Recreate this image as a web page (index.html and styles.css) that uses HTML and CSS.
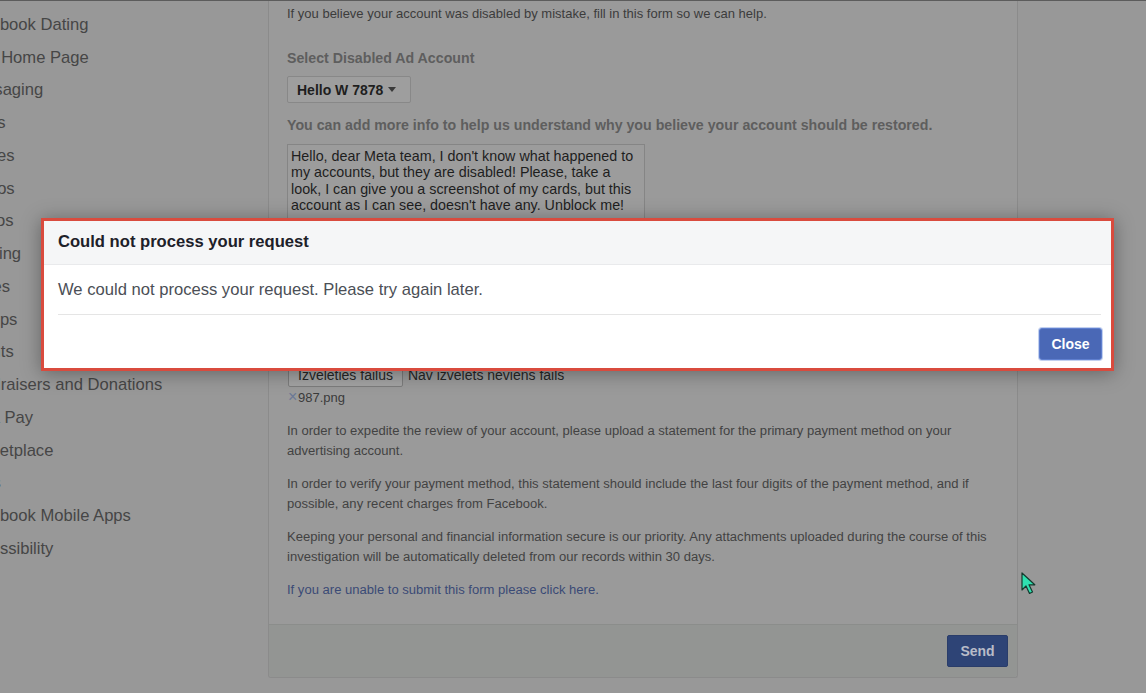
FILE: index.html
```html
<!DOCTYPE html>
<html lang="en">
<head>
    <meta charset="UTF-8">
    <meta name="viewport" content="width=device-width, initial-scale=1.0">
    <title>Disabled Ad Account</title>
    <link rel="stylesheet" href="styles.css">
</head>
<body>
    <div class="page">
        <nav class="help-nav">
            <a class="help-nav-item" href="#">Friending</a>
            <a class="help-nav-item" href="#">Facebook Dating</a>
            <a class="help-nav-item" href="#">Your Home Page</a>
            <a class="help-nav-item" href="#">Messaging</a>
            <a class="help-nav-item" href="#">Reels</a>
            <a class="help-nav-item" href="#">Stories</a>
            <a class="help-nav-item" href="#">Photos</a>
            <a class="help-nav-item" href="#">Videos</a>
            <a class="help-nav-item" href="#">Gaming</a>
            <a class="help-nav-item" href="#">Pages</a>
            <a class="help-nav-item" href="#">Groups</a>
            <a class="help-nav-item" href="#">Events</a>
            <a class="help-nav-item" href="#">Fundraisers and Donations</a>
            <a class="help-nav-item" href="#">Meta Pay</a>
            <a class="help-nav-item" href="#">Marketplace</a>
            <a class="help-nav-item" href="#">Apps</a>
            <a class="help-nav-item" href="#">Facebook Mobile Apps</a>
            <a class="help-nav-item" href="#">Accessibility</a>
        </nav>

        <form class="panel" onsubmit="return false;">
            <div class="panel-body">
                <p class="intro">If you believe your account was disabled by mistake, fill in this form so we can help.</p>

                <label class="field-label">Select Disabled Ad Account</label>
                <div class="field">
                    <button type="button" class="select-btn">Hello W 7878<span class="caret"></span></button>
                </div>

                <label class="field-label field-label-long" for="details">You can add more info to help us understand why you believe your account should be restored.</label>
                <textarea id="details" class="details">Hello, dear Meta team, I don't know what happened to
my accounts, but they are disabled! Please, take a
look, I can give you a screenshot of my cards, but this
account as I can see, doesn't have any. Unblock me!</textarea>

                <div class="file-row">
                    <span class="file-btn">Izvēlēties failus</span>
                    <span class="file-status">Nav izvēlēts neviens fails</span>
                </div>
                <div class="file-item"><span class="file-remove">×</span>987.png</div>

                <p class="note">In order to expedite the review of your account, please upload a statement for the primary payment method on your advertising account.</p>
                <p class="note">In order to verify your payment method, this statement should include the last four digits of the payment method, and if possible, any recent charges from Facebook.</p>
                <p class="note">Keeping your personal and financial information secure is our priority. Any attachments uploaded during the course of this investigation will be automatically deleted from our records within 30 days.</p>
                <p class="note"><a class="note-link" href="#">If you are unable to submit this form please click here.</a></p>
            </div>
            <div class="panel-footer">
                <button type="submit" class="send-btn">Send</button>
            </div>
        </form>
    </div>

    <div class="dialog" role="dialog">
        <div class="dialog-header">Could not process your request</div>
        <div class="dialog-body">
            <p class="dialog-text">We could not process your request. Please try again later.</p>
        </div>
        <div class="dialog-footer">
            <button type="button" class="close-btn">Close</button>
        </div>
    </div>

    <svg class="pointer" width="17" height="23" viewBox="0 0 17 23">
        <path d="M1 1 L1 18 L5 14 L8.5 21.5 L11.5 20 L8 12.8 L13.8 12.8 Z" fill="#2fe0b0" stroke="#143a2e" stroke-width="1.2" stroke-linejoin="round"/>
    </svg>
</body>
</html>
```

FILE: styles.css
```css
/* Page dimmed behind the error dialog */
body {
    margin: 0;
    background-color: #989898;
    font-family: "Liberation Sans", Arial, sans-serif;
    color: #404040;
    overflow: hidden;
}
.page {
    display: flex;
    align-items: flex-start;
    border-top: 1px solid #5c5c5c;
}

/* Left help navigation (cut off at the window edge) */
.help-nav {
    flex: none;
    width: 268px;
    margin-top: -25px;
    display: flex;
    flex-direction: column;
}
.help-nav-item {
    display: block;
    margin-left: -37px;
    font-size: 16.6px;
    line-height: 32.75px;
    color: #464646;
    text-decoration: none;
    white-space: nowrap;
}

/* Form panel */
.panel {
    flex: none;
    width: 750px;
    box-sizing: border-box;
    margin: 0;
    background-color: #9a9a9a;
    border: 1px solid #8b8b8b;
    border-top: none;
    border-radius: 0 0 3px 3px;
}
.panel-body {
    padding: 3px 18px 24px 18px;
}
.intro {
    margin: 0;
    font-size: 13px;
    line-height: 20px;
    color: #3c3c3c;
}
.field-label {
    display: block;
    margin-top: 25px;
    font-size: 14.2px;
    font-weight: bold;
    line-height: 18px;
    color: #5e5e5e;
}
.field-label-long {
    margin-top: 13px;
}
.field {
    margin-top: 9px;
}
.select-btn {
    display: inline-flex;
    align-items: center;
    height: 27px;
    box-sizing: border-box;
    padding: 0 14px 0 9px;
    border: 1px solid #888;
    border-radius: 2px;
    background-color: #9e9e9e;
    font-family: inherit;
    font-size: 14px;
    font-weight: bold;
    color: #1e1e1e;
}
.caret {
    margin-left: 5px;
    border-left: 4.5px solid transparent;
    border-right: 4.5px solid transparent;
    border-top: 5px solid #3a3a3a;
}
.details {
    display: block;
    width: 358px;
    height: 90px;
    box-sizing: border-box;
    margin-top: 10px;
    padding: 3px 3px;
    border: 1px solid #858585;
    background-color: #9c9c9c;
    font-family: inherit;
    font-size: 14.3px;
    line-height: 16.4px;
    color: #1e1e1e;
    resize: none;
    overflow: hidden;
}

/* File picker */
.file-row {
    display: flex;
    align-items: center;
    gap: 5px;
    margin-top: 129px;
    font-size: 14px;
    color: #262626;
}
.file-btn {
    display: inline-flex;
    align-items: center;
    height: 24px;
    box-sizing: border-box;
    margin-left: 1px;
    padding: 0 9px;
    border: 1px solid #7c7c7c;
    border-radius: 2px;
    background-color: #a3a3a3;
}
.file-item {
    margin-top: 1px;
    font-size: 13px;
    line-height: 20px;
    color: #3a3a3a;
}
.file-remove {
    display: inline-block;
    width: 10px;
    margin-left: 1px;
    font-size: 16px;
    line-height: 13px;
    color: #6a7896;
}

.note {
    margin: 13px 0 0;
    font-size: 13.05px;
    line-height: 20px;
    color: #424242;
}
.note-link {
    color: #3a4a76;
    text-decoration: none;
}

.panel-footer {
    display: flex;
    justify-content: flex-end;
    padding: 10px 9px;
    background-color: #939593;
    border-top: 1px solid #8b8d8b;
    border-radius: 0 0 3px 3px;
}
.send-btn {
    width: 61px;
    height: 32px;
    border: 1px solid #2a3d6a;
    border-radius: 2px;
    background-color: #2e4476;
    font-family: inherit;
    font-size: 14px;
    font-weight: bold;
    color: #b8bcc8;
}

/* Error dialog on top of the page */
.dialog {
    position: absolute;
    top: 218px;
    left: 41px;
    width: 1073px;
    box-sizing: border-box;
    border: 3px solid #d94b3e;
    background-color: #fff;
    box-shadow: 0 2px 18px rgba(0, 0, 0, 0.35);
}
.dialog-header {
    padding: 11px 14px 12px;
    background-color: #f5f6f7;
    border-bottom: 1px solid #e9eaec;
    font-size: 16.6px;
    font-weight: bold;
    line-height: 20px;
    color: #1d2129;
}
.dialog-body {
    padding: 15px 10px 0 14px;
}
.dialog-text {
    margin: 0;
    padding-bottom: 14px;
    border-bottom: 1px solid #e5e5e5;
    font-size: 16.6px;
    line-height: 20px;
    color: #4b4f56;
}
.dialog-footer {
    display: flex;
    justify-content: flex-end;
    padding: 13px 9px 8px;
}
.close-btn {
    width: 63px;
    height: 32px;
    border: 1px solid #5f7fcf;
    border-radius: 3px;
    background-color: #4a68b6;
    box-shadow: 0 0 0 1px rgba(120, 150, 220, 0.45);
    font-family: inherit;
    font-size: 14px;
    font-weight: bold;
    color: #fff;
}

/* Mouse pointer captured in the screenshot */
.pointer {
    position: absolute;
    top: 572px;
    left: 1021px;
}
```
